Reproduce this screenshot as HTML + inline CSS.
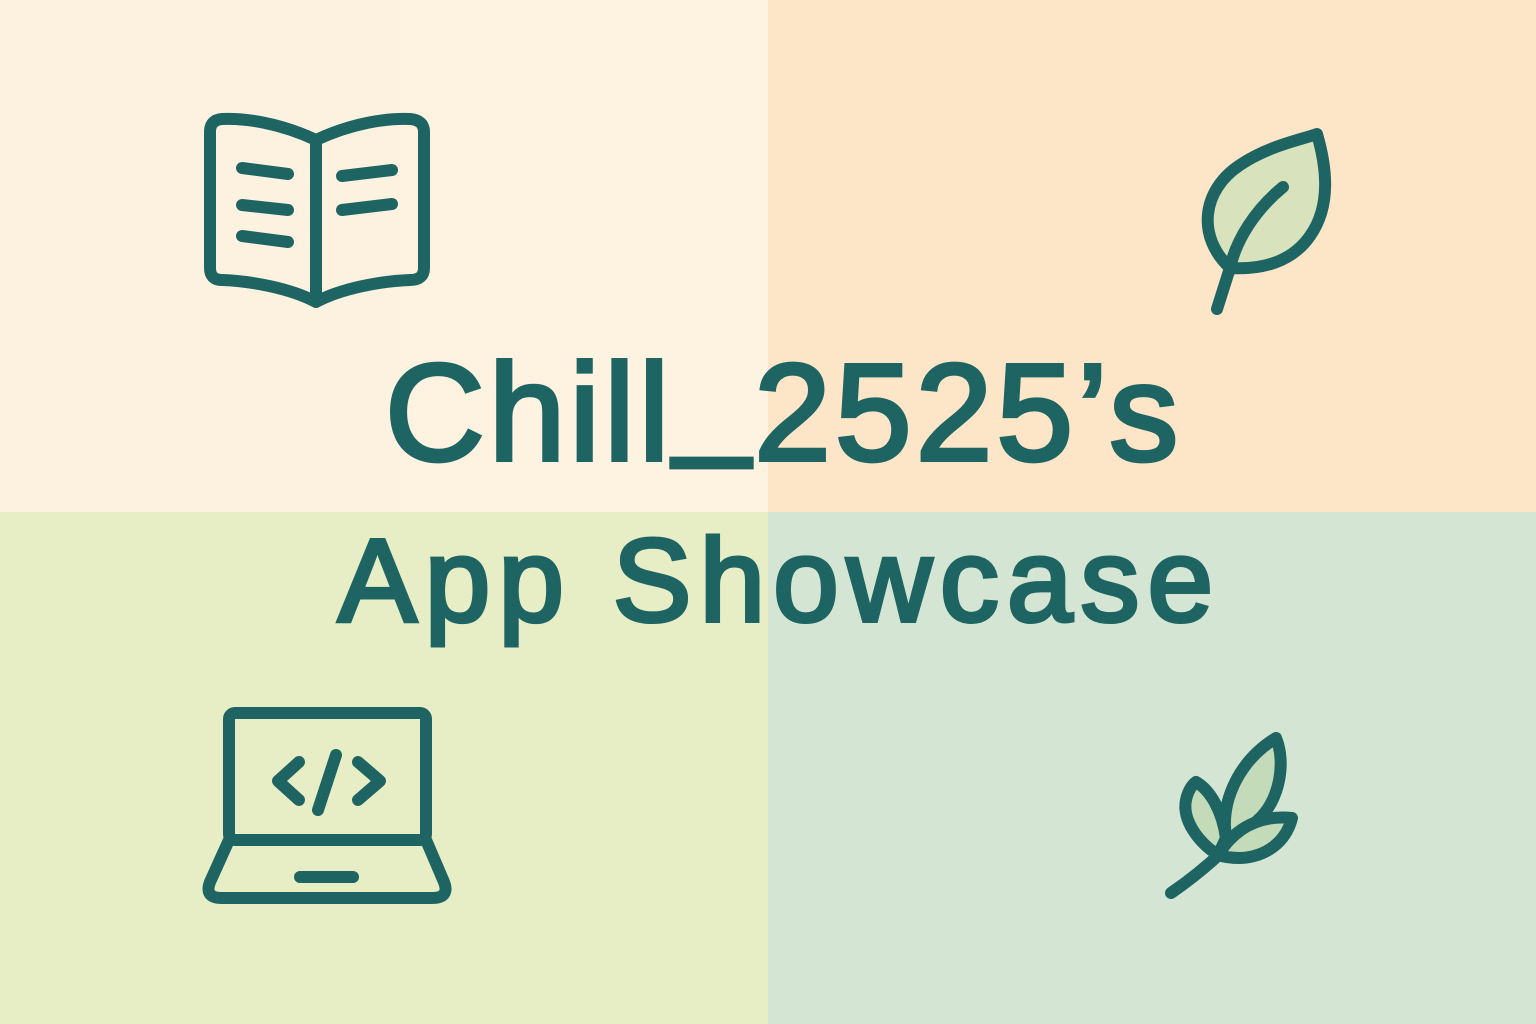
<!DOCTYPE html>
<html><head><meta charset="utf-8"><style>
html,body{margin:0;padding:0}
body{width:1536px;height:1024px;position:relative;overflow:hidden;font-family:"Liberation Sans",sans-serif}
.q{position:absolute;width:768px;height:512px}
.t{position:absolute;left:0;color:#1d6462;font-weight:normal;white-space:nowrap;-webkit-text-stroke:4px #1d6462}
svg{position:absolute;left:0;top:0}
</style></head><body>
<div class="q" style="left:0;top:0;background:linear-gradient(90deg,#fdf2e0,#fdf3e0)"></div>
<div class="q" style="left:768px;top:0;background:#fde5c8"></div>
<div class="q" style="left:0;top:512px;background:#e7eec6"></div>
<div class="q" style="left:768px;top:512px;background:#d4e5d3"></div>
<div class="t" style="top:334px;font-size:138px;left:385px;letter-spacing:4px">Chill<span style="position:relative;top:-20px">_</span>2525’s</div>
<div class="t" style="top:513px;font-size:118px;left:338px;letter-spacing:8px">App Showcase</div>
<svg width="1536" height="1024" fill="none" stroke="#1d6462" stroke-width="12" stroke-linecap="round" stroke-linejoin="round">
<path d="M316,140 C280,123 245,118 222,119 Q210,120 210,132 V268 Q210,280 222,280 C250,281 290,288 316,302 C342,288 382,281 410,280 Q424,280 424,268 V132 Q424,120 410,119 C387,118 352,123 316,140 Z M316,140 V302"/>
<path d="M242,168 L288,174 M242,205 L288,210 M242,236 L288,242 M342,176 L392,170 M342,210 L392,204"/>
<rect x="229" y="713" width="197" height="127" rx="6"/>
<path d="M229,840 L210,882 Q204,898 222,898 H432 Q450,898 444,882 L426,840"/>
<path d="M300,877 H353"/>
<path d="M299,762 L278,781 L299,800 M358,762 L380,781 L358,800 M336,755 L318,810"/>
<path fill="#d8e3bd" d="M1230,268 C1196,236 1202,190 1240,165 C1268,146 1300,140 1317,134 C1326,165 1332,205 1310,236 C1292,262 1262,270 1230,268 Z"/>
<path d="M1283,187 C1255,210 1236,240 1230,268 L1217,309"/>
<path fill="#c4dbba" d="M1218,855 C1198,842 1182,820 1186,800 C1188,790 1193,784 1196,782 C1210,790 1222,810 1226,838 Z"/>
<path fill="#c4dbba" d="M1226,838 C1220,800 1240,760 1276,738 C1286,762 1280,800 1258,820 C1248,830 1236,836 1226,838 Z"/>
<path fill="#c4dbba" d="M1218,855 C1236,826 1262,815 1292,818 C1286,842 1266,857 1240,858 C1232,858 1224,857 1218,855 Z"/>
<path d="M1171,893 C1190,880 1206,867 1222,852"/>
</svg>
</body></html>
